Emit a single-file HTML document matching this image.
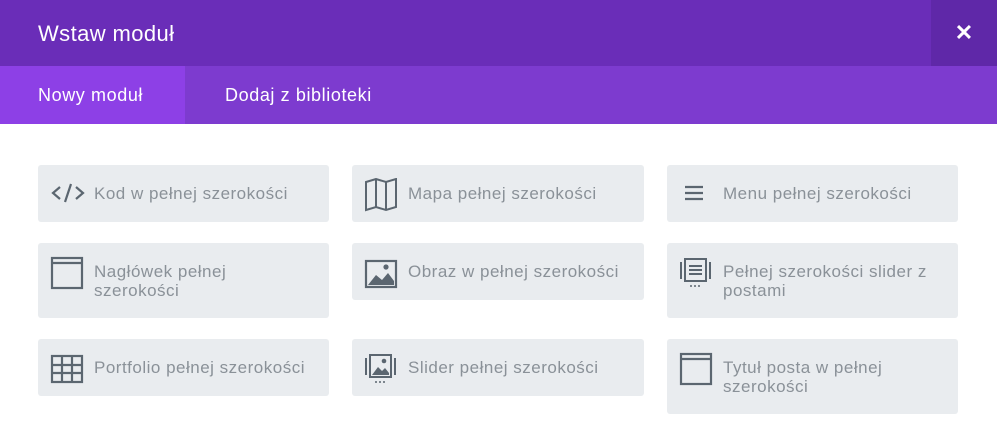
<!DOCTYPE html>
<html><head><meta charset="utf-8"><style>
*{margin:0;padding:0;box-sizing:border-box}
body{width:997px;height:442px;background:#fff;font-family:"Liberation Sans",sans-serif;position:relative;overflow:hidden}
.hd{position:absolute;left:0;top:0;width:997px;height:66px;background:#6a2db8}
.hd .t{position:absolute;left:38px;top:21px;color:#fff;font-size:22px;letter-spacing:0.4px}
.cl{position:absolute;left:931px;top:0;width:66px;height:66px;background:#5f28a8;color:#fff;font-size:22px;font-weight:bold;text-align:center;line-height:66px}
.tb{position:absolute;left:0;top:66px;width:997px;height:58px;background:#7d3bcf}
.tab{position:absolute;top:0;height:58px;line-height:58px;color:#fff;font-size:18px;letter-spacing:0.6px}
.act{left:0;width:185px;background:#8d40e6;padding-left:38px}
.c{position:absolute;background:#e9ecef;border-radius:3px;color:#8a9198;font-size:17px;line-height:19px;letter-spacing:0.5px}
.c svg{position:absolute;left:12px;top:13px}
.c span{position:absolute;left:56px;top:19px;right:4px}
</style></head><body>
<div class="hd"><div class="t">Wstaw moduł</div><div class="cl">✕</div></div>
<div class="tb"><div class="tab act">Nowy moduł</div><div class="tab" style="left:225px">Dodaj z biblioteki</div></div>

<div class="c" style="left:38px;top:165px;width:291px;height:57px">
<svg width="36" height="30" viewBox="0 0 36 30" fill="none" stroke="#5b6670" stroke-width="2.2"><path d="M10 9 L3 15 L10 21 M26 9 L33 15 L26 21 M21 6 L15 24"/></svg>
<span>Kod w pełnej szerokości</span></div>

<div class="c" style="left:38px;top:243px;width:291px;height:75px">
<svg width="36" height="36" viewBox="0 0 36 36" fill="none" stroke="#5b6670" stroke-width="2.2"><rect x="2" y="2" width="30" height="30"/><path d="M2 7 H32"/></svg>
<span style="top:19px">Nagłówek pełnej<br>szerokości</span></div>

<div class="c" style="left:38px;top:339px;width:291px;height:57px">
<svg width="36" height="32" viewBox="0 0 36 32" fill="none" stroke="#5b6670" stroke-width="2.2"><rect x="2" y="4" width="30" height="26"/><path d="M2 13 H32 M2 21 H32 M12 4 V30 M22 4 V30"/></svg>
<span>Portfolio pełnej szerokości</span></div>

<div class="c" style="left:352px;top:165px;width:292px;height:57px">
<svg width="36" height="34" viewBox="0 0 36 34" fill="none" stroke="#5b6670" stroke-width="2"><path d="M2 4 L12 1 L22 4 L32 1 V29 L22 32 L12 29 L2 32 Z M12 1 V29 M22 4 V32"/></svg>
<span>Mapa pełnej szerokości</span></div>

<div class="c" style="left:352px;top:243px;width:292px;height:57px">
<svg width="36" height="34" viewBox="0 0 36 34" fill="#5b6670" stroke="#5b6670" stroke-width="2.2"><rect x="2" y="5" width="30" height="26" fill="none"/><path d="M4 29 L12 19 L18 24 L24 17 L30 25 V29 Z" stroke="none"/><circle cx="22" cy="11" r="2.6" stroke="none"/></svg>
<span>Obraz w pełnej szerokości</span></div>

<div class="c" style="left:352px;top:339px;width:292px;height:57px">
<svg width="36" height="36" viewBox="0 0 36 36" fill="#5b6670" stroke="#5b6670" stroke-width="2"><rect x="6" y="3" width="21" height="22" fill="none"/><path d="M2 6 V23 M31 6 V23" fill="none"/><path d="M8 23 L14 15 L18 19 L21 16 L25 21 V23 Z" stroke="none"/><circle cx="20" cy="9" r="2.3" stroke="none"/><circle cx="12" cy="30" r="1" stroke="none"/><circle cx="16" cy="30" r="1" stroke="none"/><circle cx="20" cy="30" r="1" stroke="none"/></svg>
<span>Slider pełnej szerokości</span></div>

<div class="c" style="left:667px;top:165px;width:291px;height:57px">
<svg width="36" height="30" viewBox="0 0 36 30" fill="none" stroke="#5b6670" stroke-width="2.2"><path d="M6 9 H24 M6 15 H24 M6 21 H24"/></svg>
<span>Menu pełnej szerokości</span></div>

<div class="c" style="left:667px;top:243px;width:291px;height:75px">
<svg width="36" height="36" viewBox="0 0 36 36" fill="#5b6670" stroke="#5b6670" stroke-width="2"><rect x="6" y="3" width="21" height="22" fill="none"/><path d="M2 6 V23 M31 6 V23 M10 10 H23 M10 14 H23 M10 18 H23" fill="none"/><circle cx="12" cy="30" r="1" stroke="none"/><circle cx="16" cy="30" r="1" stroke="none"/><circle cx="20" cy="30" r="1" stroke="none"/></svg>
<span style="top:19px">Pełnej szerokości slider z<br>postami</span></div>

<div class="c" style="left:667px;top:339px;width:291px;height:75px">
<svg width="36" height="36" viewBox="0 0 36 36" fill="none" stroke="#5b6670" stroke-width="2.2"><rect x="2" y="2" width="30" height="30"/><path d="M2 7 H32"/></svg>
<span style="top:19px">Tytuł posta w pełnej<br>szerokości</span></div>
</body></html>
